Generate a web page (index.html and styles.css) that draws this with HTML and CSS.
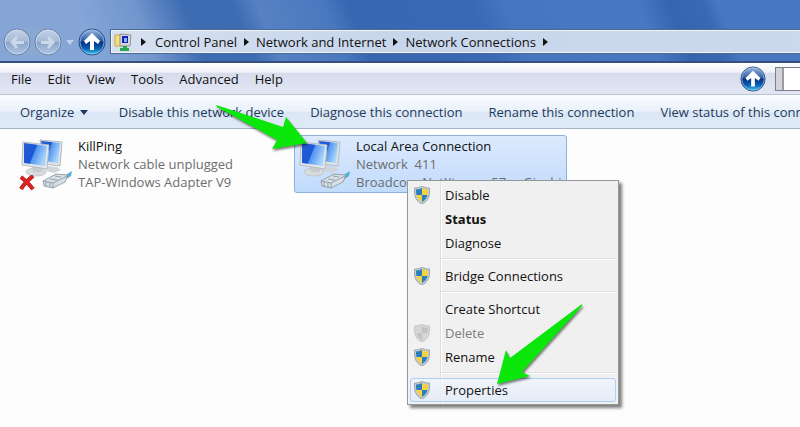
FILE: index.html
```html
<!DOCTYPE html>
<html lang="en">
<head>
    <meta charset="UTF-8">
    <meta name="viewport" content="width=device-width, initial-scale=1.0">
    <title>Network Connections</title>
    <link rel="stylesheet" href="styles.css">
</head>
<body>
    <!-- shared icons -->
    <svg class="defs" width="0" height="0" aria-hidden="true">
        <defs>
            <linearGradient id="orb" x1="0" y1="0" x2="0" y2="1">
                <stop offset="0" stop-color="#9fb9de"/>
                <stop offset=".45" stop-color="#2d5da6"/>
                <stop offset=".5" stop-color="#06307e"/>
                <stop offset=".75" stop-color="#0a5fb4"/>
                <stop offset="1" stop-color="#3fd3f5"/>
            </linearGradient>
            <linearGradient id="glass" x1="0" y1="0" x2="0" y2="1">
                <stop offset="0" stop-color="#c6d3e7"/>
                <stop offset=".48" stop-color="#a5b9d6"/>
                <stop offset=".52" stop-color="#8ba5ca"/>
                <stop offset="1" stop-color="#b3c7e2"/>
            </linearGradient>
            <linearGradient id="screen" x1="0" y1="0" x2="1" y2=".4">
                <stop offset="0" stop-color="#2a5fd0"/>
                <stop offset=".5" stop-color="#1a56d6"/>
                <stop offset=".55" stop-color="#5294f0"/>
                <stop offset="1" stop-color="#a8d4fb"/>
            </linearGradient>
            <symbol id="up" viewBox="0 0 28 28">
                <circle cx="14" cy="14" r="13" fill="url(#orb)" stroke="#274d87"/>
                <circle cx="14" cy="14" r="12" fill="none" stroke="#a9c8ea" stroke-opacity=".7"/>
                <path d="M14 5l8 8-2 3-4-3v9h-4v-9l-4 3-2-3z" fill="#fff"/>
            </symbol>
            <symbol id="adapter" viewBox="0 0 52 52">
                <path d="M19 1l22 2-2 24-16-2z" fill="#dfe3e6" stroke="#b4bac0"/>
                <path d="M20 2l19 2-2 20-14-2z" fill="url(#screen)"/>
                <path d="M27 27l9 1 4 3-7 3-8-2z" fill="#d0d5d9"/>
                <ellipse cx="15" cy="33" rx="10" ry="4" fill="#d9dcde" stroke="#c3c7ca"/>
                <path d="M11 27h9l1 6h-9z" fill="#c6cbcf"/>
                <path d="M2 3l26 3-2 24-25-4z" fill="#e4e8eb" stroke="#b4bac0"/>
                <path d="M3 4l23 3-2 20-21-3z" fill="url(#screen)"/>
                <path d="M43 37l8-5-1 5-6 4z" fill="#4fb2d3"/>
                <path d="M22 42l13-7 12 1-3 7-12 6-9-2z" fill="#d8dfe4" stroke="#84919b" stroke-width=".8"/>
                <path d="M22 42l10 2 14-7M32 44v5M25 43v4M29 44v4M34 37l6 1M29 40l7 1" fill="none" stroke="#84919b" stroke-width=".8"/>
            </symbol>
            <symbol id="shield" viewBox="0 0 16 18">
                <clipPath id="shield-clip"><path d="M8 2c2 1 4 1.500 6 1.500 0 6-1 9.500-6 12.500-5-3-6-6.500-6-12.500 2 0 4-.5 6-1.500z"/></clipPath>
                <path d="M8 0c2 1.500 5 2 7.500 2 .5 8-1 13-7.500 16C1.500 15 0 10 .5 2 3 2 6 1.500 8 0z" fill="#c3cacd" stroke="#87939a" stroke-width=".7"/>
                <g clip-path="url(#shield-clip)">
                    <path d="M0 0h8v9H0zM8 9h8v9H8z" fill="#2a7fbd"/>
                    <path d="M8 0h8v9H8zM0 9h8v9H0z" fill="#f6d243"/>
                </g>
            </symbol>
            <symbol id="shield-off" viewBox="0 0 16 18">
                <path d="M8 0c2 1.500 5 2 7.500 2 .5 8-1 13-7.500 16C1.500 15 0 10 .5 2 3 2 6 1.500 8 0z" fill="#d5d5d5" stroke="#bbb" stroke-width=".7"/>
                <path d="M8 9V3c2 .7 4 1 6 1l-1 5zM8 9v7C5 14 3 12 3 9z" fill="#c2c2c2"/>
            </symbol>
        </defs>
    </svg>

    <header class="titlebar">
        <div class="history">
            <button class="round" aria-label="Back">
                <svg width="28" height="28" viewBox="0 0 28 28"><circle cx="14" cy="14" r="13" fill="url(#glass)" stroke="#5d7fae"/><circle cx="14" cy="14" r="12" fill="none" stroke="#d2deed" stroke-opacity=".7"/><path d="M7 14l6-6 2 2-2 3h8v3h-8l2 3-2 2z" fill="#cbd8e9"/></svg>
            </button>
            <button class="round" aria-label="Forward">
                <svg width="28" height="28" viewBox="0 0 28 28"><circle cx="14" cy="14" r="13" fill="url(#glass)" stroke="#5d7fae"/><circle cx="14" cy="14" r="12" fill="none" stroke="#d2deed" stroke-opacity=".7"/><path d="M21 14l-6-6-2 2 2 3H7v3h8l-2 3 2 2z" fill="#cbd8e9"/></svg>
            </button>
        </div>
        <button class="recent" aria-label="Recent pages">
            <svg width="8" height="6" viewBox="0 0 8 6"><path d="M0 1h8L4 6z" fill="#bcd0ee"/></svg>
        </button>
        <button class="round" aria-label="Up"><svg width="28" height="28"><use href="#up"/></svg></button>
        <nav class="address" aria-label="Address">
            <svg class="place" width="18" height="18" viewBox="0 0 18 18">
                <path d="M1 2h8v11H1z" fill="#f3df7d" stroke="#c7a93c"/>
                <path d="M6 1l11 1-1 11H6z" fill="#d6d9dc" stroke="#8d939b"/>
                <path d="M8 3h6v7H8z" fill="#1523b5"/>
                <path d="M10 5h3v4h-3z" fill="#8ab5ff"/>
                <path d="M9 13h4v2h2v3H6v-3h3z" fill="#29a850"/>
            </svg>
            <span class="crumb-arrow"></span>
            <a href="#">Control Panel</a>
            <span class="crumb-arrow"></span>
            <a href="#">Network and Internet</a>
            <span class="crumb-arrow"></span>
            <a href="#">Network Connections</a>
            <span class="crumb-arrow"></span>
        </nav>
    </header>

    <div class="menubar">
        <nav class="menus">
            <button>File</button>
            <button>Edit</button>
            <button>View</button>
            <button>Tools</button>
            <button>Advanced</button>
            <button>Help</button>
        </nav>
        <button class="round" aria-label="Parent folder"><svg width="26" height="26"><use href="#up"/></svg></button>
        <div class="band">
            <span class="grip"></span>
            <input type="text" aria-label="Search">
        </div>
    </div>

    <div class="toolbar">
        <button class="organize">Organize <span class="drop"></span></button>
        <button>Disable this network device</button>
        <button>Diagnose this connection</button>
        <button>Rename this connection</button>
        <button>View status of this connection</button>
    </div>

    <main class="connections">
        <div class="connection">
            <div class="icon">
                <svg width="52" height="52"><use href="#adapter"/></svg>
                <svg class="unplugged" width="16" height="16" viewBox="0 0 16 16"><path d="M2 2c4 3 8 7 12 12M14 1C9 5 5 9 2 14" fill="none" stroke="#8f1414" stroke-width="4"/><path d="M2 2c4 3 8 7 12 12M14 1C9 5 5 9 2 14" fill="none" stroke="#e02222" stroke-width="3"/></svg>
            </div>
            <div class="details">
                <h2>KillPing</h2>
                <p>Network cable unplugged</p>
                <p>TAP-Windows Adapter V9</p>
            </div>
        </div>
        <div class="connection selected">
            <div class="icon">
                <svg width="52" height="52"><use href="#adapter"/></svg>
            </div>
            <div class="details">
                <h2>Local Area Connection</h2>
                <p>Network&nbsp; 411</p>
                <p>Broadcom NetXtreme 57xx Gigabit</p>
            </div>
        </div>
    </main>

    <div class="context-menu" role="menu">
        <button role="menuitem"><svg width="16" height="18"><use href="#shield"/></svg>Disable</button>
        <button role="menuitem" class="default">Status</button>
        <button role="menuitem">Diagnose</button>
        <hr>
        <button role="menuitem"><svg width="16" height="18"><use href="#shield"/></svg>Bridge Connections</button>
        <hr>
        <button role="menuitem">Create Shortcut</button>
        <button role="menuitem" disabled><svg width="16" height="18"><use href="#shield-off"/></svg>Delete</button>
        <button role="menuitem"><svg width="16" height="18"><use href="#shield"/></svg>Rename</button>
        <hr>
        <button role="menuitem" class="hover"><svg width="16" height="18"><use href="#shield"/></svg>Properties</button>
    </div>

    <!-- green pointers -->
    <svg class="pointers" width="800" height="427" viewBox="0 0 800 427" aria-hidden="true">
        <path d="M216 105l67 22 3-10 21 26-35 6 5-9-60-33z"/>
        <path d="M582 304l-72 54-4-8-9 34 33-8-8-4 60-66z"/>
    </svg>
</body>
</html>
```
FILE: styles.css
```css
* {
    box-sizing: border-box;
}

body {
    margin: 0;
    min-height: 100vh;
    position: relative;
    overflow: hidden;
    background: #fdfdfd;
    color: #111;
    font-family: "Open Sans", "Segoe UI", sans-serif;
    font-size: 13px;
    line-height: 18px;
}

button {
    padding: 0;
    border: 0;
    background: none;
    color: inherit;
    font: inherit;
    white-space: nowrap;
}

svg {
    display: block;
    flex: none;
}

.defs {
    position: absolute;
}

/* window frame */
.titlebar {
    display: flex;
    align-items: center;
    height: 63px;
    padding: 22px 0 0 3px;
    border-bottom: 2px solid #35507c;
    background: linear-gradient(68deg, #84a5d6 0, #84a5d6 12%, #7195cd 19%, #3d6cb3 25%, #3d6cb3 31%, #5681c3 34%, #4a78bf 42%, #3767b1 45%, #3969b5 60%, #4676c0 64%, #4878c2 80%, #3565ae 84%, #3969b3 88%, #4878c2 90%);
}

.history {
    display: flex;
    gap: 3px;
    border-radius: 14px;
    background: #8ba8d2;
}

.recent {
    margin: 0 4px;
}

.address {
    display: flex;
    flex: 1;
    align-items: center;
    height: 25px;
    margin-left: 4px;
    padding-left: 3px;
    overflow: hidden;
    border: 1px solid #4d6a97;
    border-right: 0;
    box-shadow: inset 1px 1px #eff4fb, inset 0 -1px #eff4fb;
    background: linear-gradient(90deg, #d6e0f0, #c8d6eb 40%, #cbd9ee);
    white-space: nowrap;
}

.address a {
    color: #111;
    text-decoration: none;
}

.crumb-arrow {
    margin: 0 7px;
    border: 4px solid transparent;
    border-left: 5px solid #111;
    border-right: 0;
}

.place + .crumb-arrow {
    margin: 0 9px;
}

/* menus */
.menubar {
    display: flex;
    align-items: center;
    height: 32px;
    padding-left: 11px;
    border-bottom: 1px solid #bcc3d3;
    background: linear-gradient(#fff, #f0f2f9 30%, #d7dced 32%, #e2e6f4);
}

.menus {
    display: flex;
    flex: 1;
    gap: 16px;
}

.band {
    display: flex;
    width: 25px;
    height: 24px;
    margin-left: 9px;
    border: 1px solid #7c7f88;
    border-right: 0;
    background: #fff;
}

.grip {
    width: 8px;
    border-right: 2px solid #9a9da3;
    background: #d2d4d9;
}

.band input {
    flex: 1;
    min-width: 0;
    padding: 0;
    border: 0;
    outline: 0;
}

.toolbar {
    display: flex;
    align-items: center;
    gap: 26px;
    height: 34px;
    padding-left: 20px;
    overflow: hidden;
    border-bottom: 1px solid #a5b2c8;
    background: linear-gradient(#fafcff, #eaf1fa 48%, #dce7f5 52%, #dfe9f7);
    color: #1e395b;
}

.organize {
    margin-right: 5px;
}

.drop {
    display: inline-block;
    margin-left: 2px;
    vertical-align: 2px;
    border: 4px solid transparent;
    border-top: 5px solid #1e395b;
    border-bottom: 0;
}

/* adapters */
.connections {
    display: flex;
    gap: 5px;
    padding: 6px 16px;
}

.connection {
    display: flex;
    gap: 5px;
    width: 273px;
    height: 58px;
    padding: 1px 4px;
    border: 1px solid transparent;
    border-radius: 3px;
}

.selected {
    border-color: #8fb0d8;
    background: linear-gradient(#dceafd, #c1dbfc);
}

.icon {
    position: relative;
    padding-top: 2px;
}

.unplugged {
    position: absolute;
    left: -2px;
    bottom: 0;
}

.details {
    min-width: 0;
    overflow: hidden;
    color: #6d6d6d;
    white-space: nowrap;
}

.details h2,
.details p {
    margin: 0;
    font-size: 13px;
    font-weight: normal;
    line-height: 18px;
}

.details h2 {
    color: #111;
}

/* right-click menu */
.context-menu {
    position: absolute;
    left: 407px;
    top: 180px;
    width: 212px;
    padding: 2px;
    border: 1px solid #979797;
    background: linear-gradient(90deg, #f1f1f1 32px, #dedede 32px, #dedede 33px, #fff 33px, #fff 34px, #f0f0f0 34px);
    box-shadow: 3px 3px 3px rgba(0, 0, 0, .5);
}

.context-menu button {
    display: flex;
    align-items: center;
    gap: 15px;
    width: 100%;
    height: 24px;
    padding-left: 3px;
    border: 1px solid transparent;
    border-radius: 3px;
}

.context-menu button:not(:has(svg)) {
    padding-left: 34px;
}

.context-menu button:disabled {
    color: #7d7d7d;
}

.context-menu .default {
    font-weight: bold;
}

.context-menu .hover {
    border-color: #aecff7;
    background: linear-gradient(rgba(240, 245, 253, .8), rgba(226, 236, 250, .8));
}

.context-menu hr {
    height: 2px;
    margin: 3px 0 4px 31px;
    border: 0;
    border-top: 1px solid #e0e0e0;
    background: #fff;
}

.pointers {
    position: absolute;
    left: 0;
    top: 0;
    fill: #0be60b;
    filter: drop-shadow(1px 2px 1px rgba(0, 0, 0, .5));
    pointer-events: none;
}
```
